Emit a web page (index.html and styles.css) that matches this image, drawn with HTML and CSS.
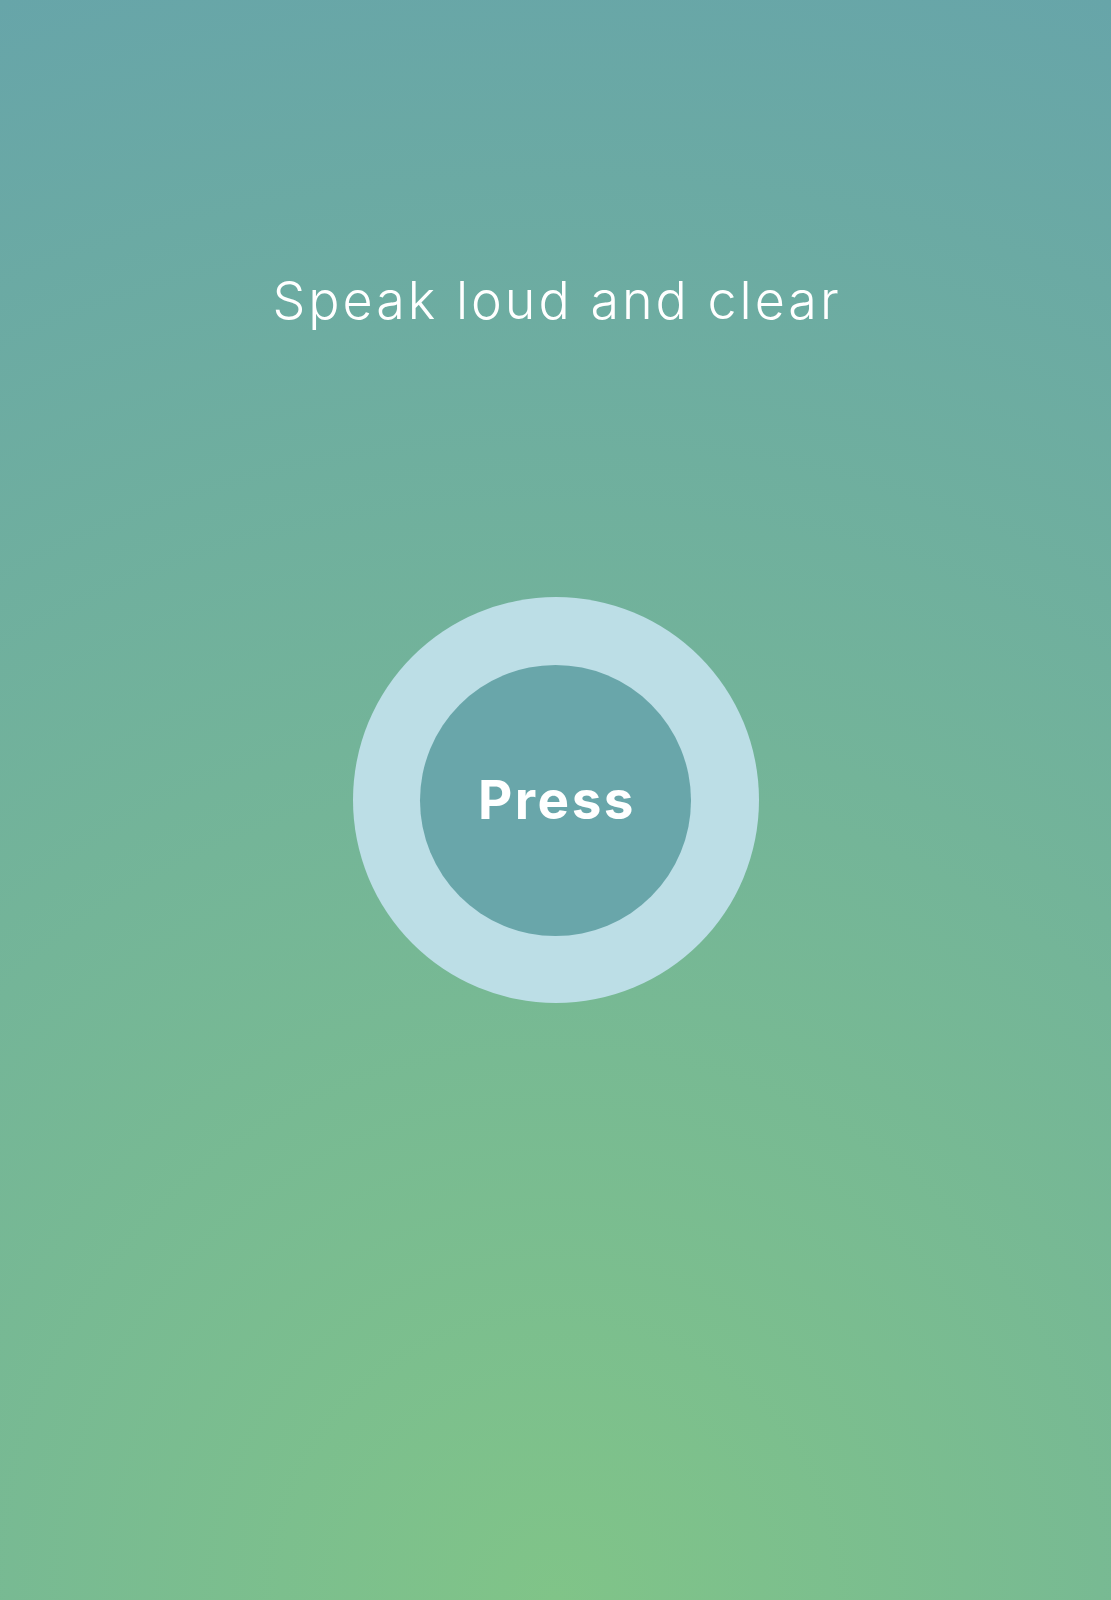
FILE: index.html
```html
<!DOCTYPE html>
<html lang="en">
<head>
<meta charset="utf-8">
<title>Speak loud and clear</title>
<link rel="stylesheet" href="styles.css">
</head>
<body>
<main class="screen">
  <h1 class="prompt">Speak loud and clear</h1>
  <button class="record" type="button">
    <span class="record-inner">Press</span>
  </button>
</main>
</body>
</html>
```

FILE: styles.css
```css
html, body {
  margin: 0;
  padding: 0;
}

body {
  font-family: Inter, "Open Sans", sans-serif;
}

.screen {
  box-sizing: border-box;
  width: 100%;
  min-height: 1600px;
  padding-top: 275px;
  display: flex;
  flex-direction: column;
  align-items: center;
  background: radial-gradient(circle farthest-corner at 50% 100%, #80c488 0%, #67a5a9 100%);
}

.prompt {
  margin: 0;
  padding-left: 3px;
  font-size: 52px;
  line-height: 52px;
  font-weight: 300;
  color: #ffffff;
  letter-spacing: 3px;
}

.record {
  margin-top: 270px;
  width: 406px;
  height: 406px;
  border: none;
  padding: 0;
  border-radius: 50%;
  background: #bcdee6;
  display: flex;
  align-items: center;
  justify-content: center;
  cursor: pointer;
}

.record-inner {
  width: 271px;
  height: 271px;
  box-sizing: border-box;
  padding-left: 3px;
  border-radius: 50%;
  background: #69a6aa;
  display: flex;
  align-items: center;
  justify-content: center;
  font-family: Inter, "Open Sans", sans-serif;
  font-size: 53px;
  font-weight: 700;
  color: #ffffff;
  letter-spacing: 2.5px;
}
```
